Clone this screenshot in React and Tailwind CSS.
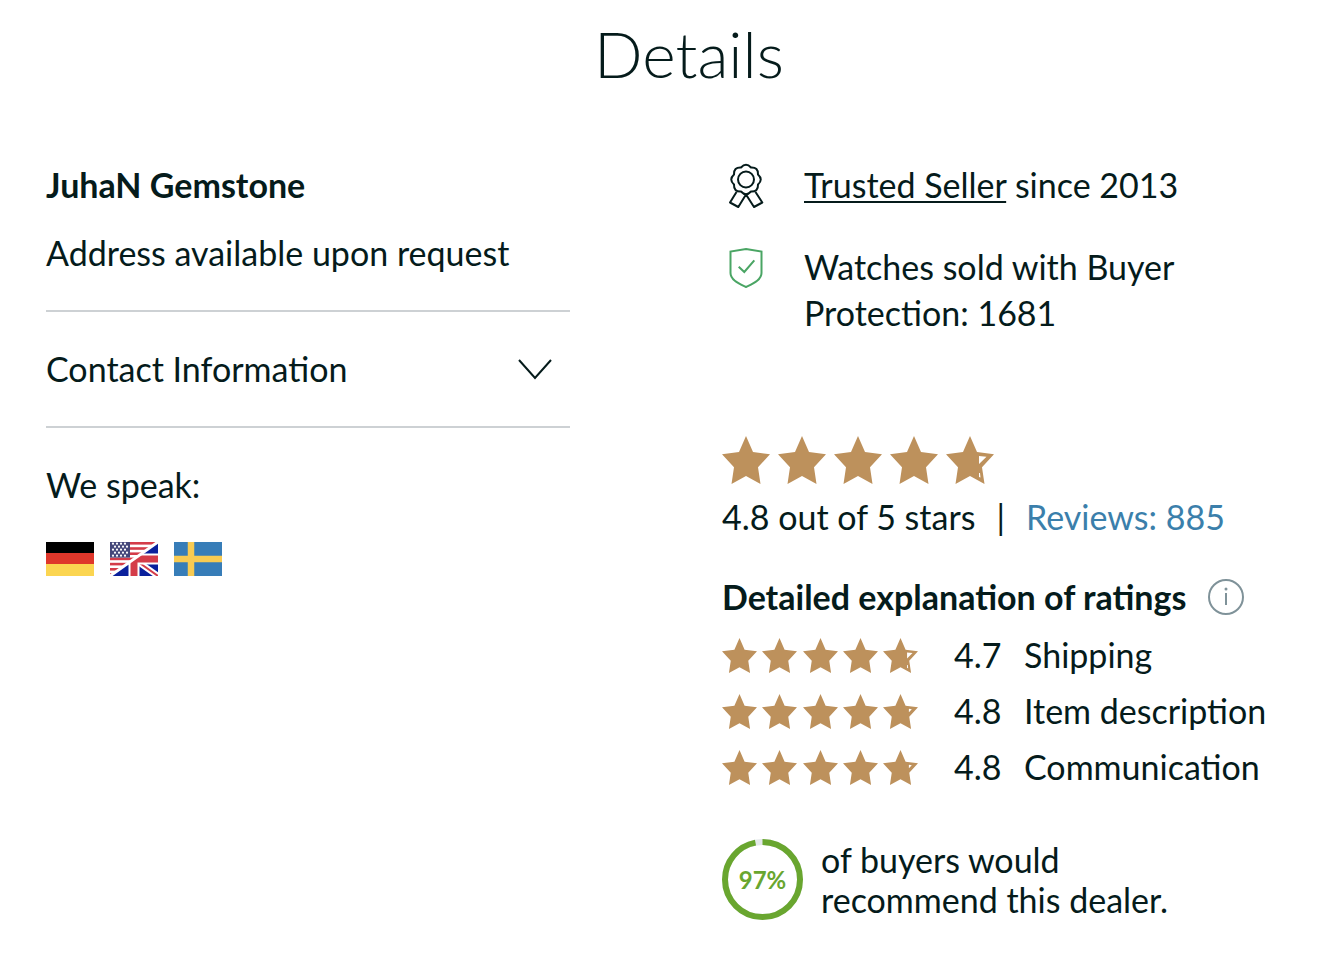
import React from "react";

const STAR_PATH =
  "M24 0 31 16 48 18.3 36 31.3 38.5 48 24 40 9.5 48 12 31.3 0 18.3 17 16Z";

// Unfilled part of the last star
const HOLLOW_WIDE = "M33 20V28L40.5 20.700ZM33 37V41L34.5 41.500 34 37Z";
const HOLLOW_NARROW = "M35.5 20.300V25L39.5 20.800Z";

const ratings = [
  { score: "4.7", label: "Shipping", hollow: HOLLOW_WIDE },
  { score: "4.8", label: "Item description", hollow: HOLLOW_NARROW },
  { score: "4.8", label: "Communication", hollow: HOLLOW_NARROW },
];

const Stars = ({ small, hollow, label }) => (
  <div
    className={small ? "flex w-[196px] justify-between" : "flex gap-2"}
    role="img"
    aria-label={label}
  >
    {[0, 1, 2, 3, 4].map((i) => (
      <svg
        key={i}
        viewBox="0 0 48 48"
        className={small ? "size-[35px]" : "size-12"}
        fill="#bd915c"
        aria-hidden="true"
      >
        <path d={i === 4 ? STAR_PATH + hollow : STAR_PATH} fillRule="evenodd" />
      </svg>
    ))}
  </div>
);

const AwardIcon = () => (
  <svg viewBox="0 0 48 48" className="size-12 shrink-0" fill="none" stroke="#051b1b" strokeWidth="2" strokeLinejoin="round" aria-hidden="true">
    <path d="M19 5.500Q24 0 29 5.500 36.400 5.100 36 12.500 41.500 17.500 36 22.500 36.400 29.900 29 29.500 24 35 19 29.500 11.600 29.900 12 22.500 6.500 17.500 12 12.500 11.600 5.100 19 5.500Z" />
    <circle cx="24" cy="17.500" r="8" />
    <path d="M14.500 30 8 40.500 16.300 45 24 32.500 32 45 40.300 40.500 33.500 30" />
  </svg>
);

const ShieldIcon = () => (
  <svg viewBox="0 0 48 48" className="size-12 shrink-0" fill="none" stroke="#4aa564" strokeWidth="2" aria-hidden="true">
    <path d="M24 5 39.500 7.500V29C39.500 36 31 39.500 24 43 17 39.500 8.500 36 8.500 29V7.500Z" />
    <path d="m16.700 22.700 5.600 5.300 10-11.700" />
  </svg>
);

const GermanFlag = () => (
  <svg viewBox="0 0 48 34" className="h-[34px] w-12" role="img" aria-label="German">
    <rect width="48" height="12" fill="#000" />
    <rect y="11" width="48" height="12" fill="#df372b" />
    <rect y="22" width="48" height="12" fill="#fbd551" />
  </svg>
);

const EnglishFlag = () => (
  <svg viewBox="0 0 48 34" className="h-[34px] w-12" role="img" aria-label="English">
    <defs>
      <clipPath id="uk-half">
        <path d="M48 0V34H0Z" />
      </clipPath>
    </defs>
    <rect width="48" height="34" fill="#fff" />
    {[0, 5.2, 10.4, 15.6, 20.8, 26, 31.2].map((y) => (
      <rect key={y} y={y} width="48" height="2.600" fill="#d43c49" />
    ))}
    <rect width="20" height="15.600" fill="#44477a" />
    {[2, 5, 8, 11, 14].map((y, row) =>
      [3, 7, 11, 15].map((x) => (
        <circle key={`${x}-${y}`} cx={x + (row % 2) * 2} cy={y - 0.3} r="1.100" fill="#fff" />
      ))
    )}
    <g clipPath="url(#uk-half)">
      <rect width="48" height="34" fill="#0a209c" />
      <path d="M24 17 48 34" stroke="#fff" strokeWidth="6" />
      <path d="M24 17 48 34" stroke="#d43c49" strokeWidth="2" />
      <path d="M24 0V34M0 17H48" stroke="#fff" strokeWidth="11" />
      <path d="M24 0V34M0 17H48" stroke="#d43c49" strokeWidth="7" />
    </g>
    <path d="M0 34 48 0" stroke="#fff" strokeWidth="3" />
  </svg>
);

const SwedishFlag = () => (
  <svg viewBox="0 0 48 34" className="h-[34px] w-12" role="img" aria-label="Swedish">
    <rect width="48" height="34" fill="#377db8" />
    <path d="M17 0V34M0 17H48" stroke="#f8cb52" strokeWidth="6.500" />
  </svg>
);

const SellerInfo = () => (
  <section className="mr-[119px]">
    <h2 className="font-bold">JuhaN Gemstone</h2>
    <p className="mt-[22px]">Address available upon request</p>
    <button
      type="button"
      className="mt-[34px] flex w-full items-center justify-between border-y-2 border-[#cdd1d4] py-[34px] pr-[17px] text-left"
    >
      Contact Information
      <svg viewBox="0 0 36 24" className="h-6 w-9" fill="none" stroke="#051b1b" strokeWidth="2" aria-hidden="true">
        <path d="m2 3 16 18L34 3" />
      </svg>
    </button>
    <p className="mt-[34px]">We speak:</p>
    <div className="mt-[34px] flex gap-4">
      <GermanFlag />
      <EnglishFlag />
      <SwedishFlag />
    </div>
  </section>
);

const RecommendRing = () => (
  <div className="grid size-[81px] shrink-0 place-items-center">
    <svg viewBox="0 0 81 81" className="col-start-1 row-start-1 size-[81px]" fill="none" strokeWidth="6" aria-hidden="true">
      <circle cx="40.500" cy="40.500" r="37.500" stroke="#e4e8ea" />
      <circle cx="40.500" cy="40.500" r="37.500" stroke="#69a62f" pathLength="100" strokeDasharray="97 3" transform="rotate(-90 40.5 40.5)" />
    </svg>
    <span className="col-start-1 row-start-1 text-2xl font-bold text-[#69a62f]">97%</span>
  </div>
);

const SellerRatings = () => (
  <section className="pl-[33px]">
    <div className="flex gap-[34px]">
      <AwardIcon />
      <p>
        <a href="#trusted" className="underline decoration-2 underline-offset-3">
          Trusted Seller
        </a>{" "}
        since 2013
      </p>
    </div>
    <div className="mt-[34px] flex gap-[34px]">
      <ShieldIcon />
      <p>
        Watches sold with Buyer
        <br />
        Protection: 1681
      </p>
    </div>

    <div className="mt-[100px]">
      <Stars hollow={HOLLOW_WIDE} label="4.8 out of 5 stars" />
    </div>
    <p className="mt-[10px] flex">
      <span>4.8 out of 5 stars</span>
      <span className="mx-[21px]">|</span>
      <a href="#reviews" className="text-[#3b7fab]">
        Reviews: 885
      </a>
    </p>

    <div className="mt-[34px] flex items-center gap-[22px]">
      <h3 className="font-bold">Detailed explanation of ratings</h3>
      <button type="button" aria-label="More about ratings">
        <svg viewBox="0 0 36 36" className="size-9" fill="none" stroke="#7f9299" strokeWidth="2" aria-hidden="true">
          <circle cx="18" cy="18" r="17" />
          <path d="M18 14V26" />
          <circle cx="18" cy="10" r="1.500" fill="#7f9299" stroke="none" />
        </svg>
      </button>
    </div>
    <ul className="mt-3 flex flex-col gap-[10px]">
      {ratings.map((row) => (
        <li key={row.label} className="flex items-center">
          <Stars small hollow={row.hollow} label={`${row.score} out of 5 stars`} />
          <span className="ml-9 w-[70px]">{row.score}</span>
          <span>{row.label}</span>
        </li>
      ))}
    </ul>

    <div className="mt-[49px] flex items-center gap-[18px]">
      <RecommendRing />
      <p className="leading-10">
        of buyers would
        <br />
        recommend this dealer.
      </p>
    </div>
  </section>
);

const App = () => {
  return (
    <main className="min-h-screen bg-white pr-3 pb-14 pl-[46px] pt-4 font-['Lato',sans-serif] text-[34px] leading-[46px] text-[#051b1b]">
      <h1 className="text-center text-[64px] leading-[76px] font-light">Details</h1>
      <div className="mt-[70px] grid grid-cols-2">
        <SellerInfo />
        <SellerRatings />
      </div>
    </main>
  );
};

export default App;
